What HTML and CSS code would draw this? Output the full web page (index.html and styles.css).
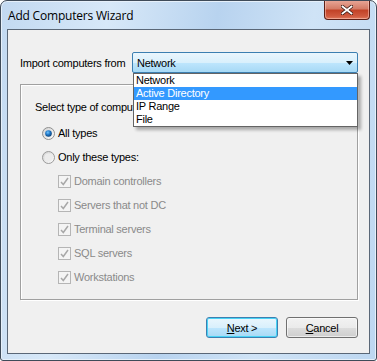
FILE: index.html
```html
<!DOCTYPE html>
<html lang="en">
<head>
    <meta charset="UTF-8">
    <title>Add Computers Wizard</title>
    <link rel="stylesheet" href="styles.css">
</head>
<body>

<div class="window">
    <div class="titlebar">
        <span class="title">Add Computers Wizard</span>
        <div class="close">
            <svg width="12" height="10" viewBox="0 0 12 10">
                <path d="M1.5 1.5 L10.5 8.5 M10.5 1.5 L1.5 8.5" stroke="#3a1a14" stroke-width="3.4" stroke-linecap="square"/>
                <path d="M1.5 1.5 L10.5 8.5 M10.5 1.5 L1.5 8.5" stroke="#ffffff" stroke-width="1.8" stroke-linecap="square"/>
            </svg>
        </div>
    </div>

    <div class="client">
        <div class="import-row">
            <label class="import-label">Import computers from</label>
            <div class="combo">
                <span class="combo-text">Network</span>
                <svg class="combo-arrow" width="7" height="4" viewBox="0 0 7 4">
                    <path d="M0 0 H7 L3.5 4 Z" fill="#000"/>
                </svg>
                <!-- liste ouverte -->
                <ul class="droplist">
                    <li>Network</li>
                    <li class="selected">Active Directory</li>
                    <li>IP Range</li>
                    <li>File</li>
                </ul>
            </div>
        </div>

        <div class="group">
            <!-- le libellé est caché en partie par la liste ouverte -->
            <div class="group-label">Select type of computers:</div>

            <div class="row">
                <svg class="radio" width="13" height="13" viewBox="0 0 13 13">
                    <defs>
                        <linearGradient id="rbg" x1="0" y1="0" x2="1" y2="1">
                            <stop offset="0" stop-color="#d0d0d0"/>
                            <stop offset="1" stop-color="#ffffff"/>
                        </linearGradient>
                        <radialGradient id="dot" cx="0.4" cy="0.35" r="0.7">
                            <stop offset="0" stop-color="#6fc4ff"/>
                            <stop offset="0.5" stop-color="#1c74c4"/>
                            <stop offset="1" stop-color="#0c3c6e"/>
                        </radialGradient>
                    </defs>
                    <circle cx="6.5" cy="6.5" r="6" fill="url(#rbg)" stroke="#8e8f8f"/>
                    <circle cx="6.5" cy="6.5" r="3.3" fill="url(#dot)"/>
                </svg>
                <span>All types</span>
            </div>

            <div class="row">
                <svg class="radio" width="13" height="13" viewBox="0 0 13 13">
                    <circle cx="6.5" cy="6.5" r="6" fill="url(#rbg)" stroke="#9a9a9a"/>
                    <circle cx="6.5" cy="6.5" r="4" fill="#ececec"/>
                </svg>
                <span>Only these types:</span>
            </div>

            <div class="row sub disabled">
                <span class="check"><svg width="9" height="9" viewBox="0 0 9 9"><path d="M1 5 L3.3 7.5 L8 1" fill="none" stroke="#a8a8a8" stroke-width="1.5"/></svg></span>
                <span>Domain controllers</span>
            </div>
            <div class="row sub disabled">
                <span class="check"><svg width="9" height="9" viewBox="0 0 9 9"><path d="M1 5 L3.3 7.5 L8 1" fill="none" stroke="#a8a8a8" stroke-width="1.5"/></svg></span>
                <span>Servers that not DC</span>
            </div>
            <div class="row sub disabled">
                <span class="check"><svg width="9" height="9" viewBox="0 0 9 9"><path d="M1 5 L3.3 7.5 L8 1" fill="none" stroke="#a8a8a8" stroke-width="1.5"/></svg></span>
                <span>Terminal servers</span>
            </div>
            <div class="row sub disabled">
                <span class="check"><svg width="9" height="9" viewBox="0 0 9 9"><path d="M1 5 L3.3 7.5 L8 1" fill="none" stroke="#a8a8a8" stroke-width="1.5"/></svg></span>
                <span>SQL servers</span>
            </div>
            <div class="row sub disabled">
                <span class="check"><svg width="9" height="9" viewBox="0 0 9 9"><path d="M1 5 L3.3 7.5 L8 1" fill="none" stroke="#a8a8a8" stroke-width="1.5"/></svg></span>
                <span>Workstations</span>
            </div>
        </div>

        <div class="buttons">
            <button class="btn default"><u>N</u>ext &gt;</button>
            <button class="btn"><u>C</u>ancel</button>
        </div>
    </div>
</div>

</body>
</html>
```

FILE: styles.css
```css
body {
    margin: 0;
    padding: 0;
    background-color: #ffffff;
    font-family: "Liberation Sans", Arial, sans-serif;
}
.window {
    box-sizing: border-box;
    width: 377px;
    height: 361px;
    border: 1px solid #3f4b59;
    border-radius: 7px 7px 3px 3px;
    padding: 0 6px 6px 6px;
    background: linear-gradient(100deg, #c2d9f1 0%, #d7e8f8 25%, #b8d3ef 50%, #cfe3f6 72%, #bdd7f1 100%);
    box-shadow: inset 0 0 0 1px #e6f0fa;
    overflow: hidden;
}
.titlebar {
    height: 28px;
    display: flex;
    justify-content: space-between;
    align-items: flex-start;
}
.title {
    font-family: "Open Sans", "Noto Sans", sans-serif;
    font-size: 12px;
    color: #000;
    margin-top: 6px;
    padding-left: 1px;
    letter-spacing: -0.2px;
}
.close {
    box-sizing: border-box;
    width: 46px;
    height: 20px;
    margin-top: -1px;
    border: 1px solid #5c1f16;
    border-top: none;
    border-radius: 0 0 4px 4px;
    background: linear-gradient(#e9a99a 0%, #d47d68 45%, #c24328 55%, #d05a3f 85%, #e07a5c 100%);
    box-shadow: inset 0 0 0 1px rgba(255, 210, 200, 0.5);
    display: flex;
    align-items: center;
    justify-content: center;
}
.client {
    box-sizing: border-box;
    width: 363px;
    height: 325px;
    border: 1px solid #5a6777;
    background-color: #f0f0f0;
    padding: 22px 11px 0 12px;
    font-size: 11px;
    letter-spacing: -0.25px;
    color: #000;
}
.import-row {
    display: flex;
    align-items: center;
    height: 21px;
}
.import-label {
    width: 112px;
    flex: none;
}
.combo {
    position: relative;
    flex: 1;
    box-sizing: border-box;
    height: 21px;
    border: 1px solid #3c7fb1;
    border-radius: 2px;
    background: linear-gradient(#eaf6fd 0%, #d9f0fc 50%, #bee6fd 51%, #a7d9f5 100%);
    display: flex;
    align-items: center;
    padding-left: 4px;
}
.combo-text {
    flex: 1;
}
.combo-arrow {
    margin-right: 4px;
}
.droplist {
    position: absolute;
    left: 0;
    right: -1px;
    top: 20px;
    margin: 0;
    padding: 0;
    list-style: none;
    background-color: #fff;
    border: 1px solid #646464;
    box-shadow: 3px 3px 3px rgba(0, 0, 0, 0.3);
    z-index: 2;
}
.droplist li {
    height: 13px;
    line-height: 13px;
    padding-left: 2px;
}
.droplist li.selected {
    background-color: #3399ff;
    color: #fff;
}
.group {
    box-sizing: border-box;
    height: 216px;
    margin-top: 11px;
    border: 1px solid #a0a0a0;
    box-shadow: 1px 1px 0 #ffffff, inset 1px 1px 0 #ffffff;
    padding: 10px 0 0 14px;
}
.group-label {
    width: 98px;
    height: 24px;
    line-height: 24px;
    margin-bottom: 2px;
    white-space: nowrap;
    overflow: hidden;
}
.row {
    height: 24px;
    display: flex;
    align-items: center;
    padding-left: 7px;
}
.radio {
    margin-right: 3px;
    flex: none;
}
.row.sub {
    padding-left: 23px;
}
.disabled {
    color: #8a8a8a;
}
.check {
    box-sizing: border-box;
    width: 13px;
    height: 13px;
    border: 1px solid #b5b5b5;
    background-color: #f4f4f4;
    display: flex;
    align-items: center;
    justify-content: center;
    margin-right: 3px;
}
.buttons {
    display: flex;
    justify-content: flex-end;
    gap: 8px;
    margin-top: 17px;
}
.btn {
    box-sizing: border-box;
    width: 72px;
    height: 21px;
    padding: 0;
    border: 1px solid #707070;
    border-radius: 3px;
    background: linear-gradient(#f2f2f2 0%, #ebebeb 50%, #dddddd 51%, #cfcfcf 100%);
    box-shadow: inset 0 0 0 1px rgba(255, 255, 255, 0.6);
    font-family: "Liberation Sans", Arial, sans-serif;
    font-size: 11px;
    letter-spacing: -0.25px;
    color: #000;
}
.btn.default {
    border-color: #3c7fb1;
    background: linear-gradient(#eaf6fd 0%, #d9f0fc 50%, #bee6fd 51%, #a7d9f5 100%);
    box-shadow: inset 0 0 0 1px #48d3f5;
}
```
